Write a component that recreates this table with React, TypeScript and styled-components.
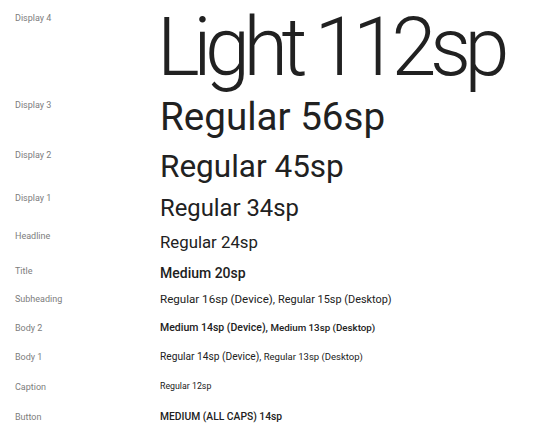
import React from 'react';
import styled, { createGlobalStyle } from 'styled-components';

type Part = { text: string; size: number };

type TypeStyle = {
  label: string;
  parts: Part[];
  weight: number;
  gap: number;
  labelOffset: number;
  tracking?: number;
  shift?: number;
  leading?: number;
};

const typeStyles: TypeStyle[] = [
  {
    label: 'Display 4',
    parts: [{ text: 'Light 112sp', size: 81 }],
    weight: 300,
    gap: 0,
    labelOffset: 13.4,
    tracking: -0.0796,
    shift: -3,
    leading: 1.18,
  },
  { label: 'Display 3', parts: [{ text: 'Regular 56sp', size: 38.6 }], weight: 400, gap: -1.44, labelOffset: 6.26 },
  { label: 'Display 2', parts: [{ text: 'Regular 45sp', size: 31.5 }], weight: 400, gap: 7.29, labelOffset: 2.05 },
  { label: 'Display 1', parts: [{ text: 'Regular 34sp', size: 23.8 }], weight: 400, gap: 8.47, labelOffset: -1.22 },
  { label: 'Headline', parts: [{ text: 'Regular 24sp', size: 16.8 }], weight: 400, gap: 9.04, labelOffset: -0.82 },
  { label: 'Title', parts: [{ text: 'Medium 20sp', size: 14 }], weight: 500, gap: 13.42, labelOffset: 0.6 },
  {
    label: 'Subheading',
    parts: [
      { text: 'Regular 16sp (Device), ', size: 11.6 },
      { text: 'Regular 15sp (Desktop)', size: 10.9 },
    ],
    weight: 400,
    gap: 11.5,
    labelOffset: 0.3,
  },
  {
    label: 'Body 2',
    parts: [
      { text: 'Medium 14sp (Device), ', size: 10.5 },
      { text: 'Medium 13sp (Desktop)', size: 9.75 },
    ],
    weight: 500,
    gap: 15.03,
    labelOffset: 0.35,
  },
  {
    label: 'Body 1',
    parts: [
      { text: 'Regular 14sp (Device), ', size: 10.2 },
      { text: 'Regular 13sp (Desktop)', size: 9.5 },
    ],
    weight: 400,
    gap: 15.69,
    labelOffset: 1.02,
  },
  { label: 'Caption', parts: [{ text: 'Regular 12sp', size: 8.8 }], weight: 400, gap: 18.1, labelOffset: 0.72 },
  { label: 'Button', parts: [{ text: 'MEDIUM (ALL CAPS) 14sp', size: 10.3 }], weight: 500, gap: 18.5, labelOffset: 1.15 },
];

const GlobalStyle = createGlobalStyle`
  html, body {
    margin: 0;
    padding: 0;
    background: #ffffff;
  }
  body {
    font-family: Roboto, "Noto Sans", sans-serif;
    -webkit-font-smoothing: antialiased;
  }
`;

const App = () => {
  return (
    <>
      <GlobalStyle />
      <Sheet>
        {typeStyles.map((style) => (
          <Row key={style.label} $gap={style.gap}>
            <Label $offset={style.labelOffset}>{style.label}</Label>
            <Sample
              $size={style.parts[0].size}
              $weight={style.weight}
              $tracking={style.tracking ?? 0}
              $shift={style.shift ?? 0}
              $leading={style.leading ?? 1.2}
            >
              {style.parts.map((part) => (
                <Part key={part.text} $size={part.size}>
                  {part.text}
                </Part>
              ))}
            </Sample>
          </Row>
        ))}
      </Sheet>
    </>
  );
};

const Sheet = styled.main`
  width: 545px;
  height: 431px;
  overflow: hidden;
  display: flex;
  flex-direction: column;
  background: #ffffff;
`;

const Row = styled.div<{ $gap: number }>`
  display: flex;
  align-items: flex-start;
  margin-top: ${(p) => p.$gap}px;
`;

const Label = styled.div<{ $offset: number }>`
  flex: 0 0 160px;
  box-sizing: border-box;
  padding-left: 15px;
  margin-top: ${(p) => p.$offset}px;
  font-size: 9px;
  line-height: 1.2;
  color: #7d7d7d;
  white-space: nowrap;
`;

const Sample = styled.div<{
  $size: number;
  $weight: number;
  $tracking: number;
  $shift: number;
  $leading: number;
}>`
  margin-left: ${(p) => p.$shift}px;
  padding-right: ${(p) => Math.abs(p.$tracking) + 0.02}em;
  font-size: ${(p) => p.$size}px;
  font-weight: ${(p) => p.$weight};
  letter-spacing: ${(p) => p.$tracking}em;
  line-height: ${(p) => p.$leading};
  color: #212121;
  white-space: nowrap;
`;

const Part = styled.span<{ $size: number }>`
  font-size: ${(p) => p.$size}px;
`;

export default App;
